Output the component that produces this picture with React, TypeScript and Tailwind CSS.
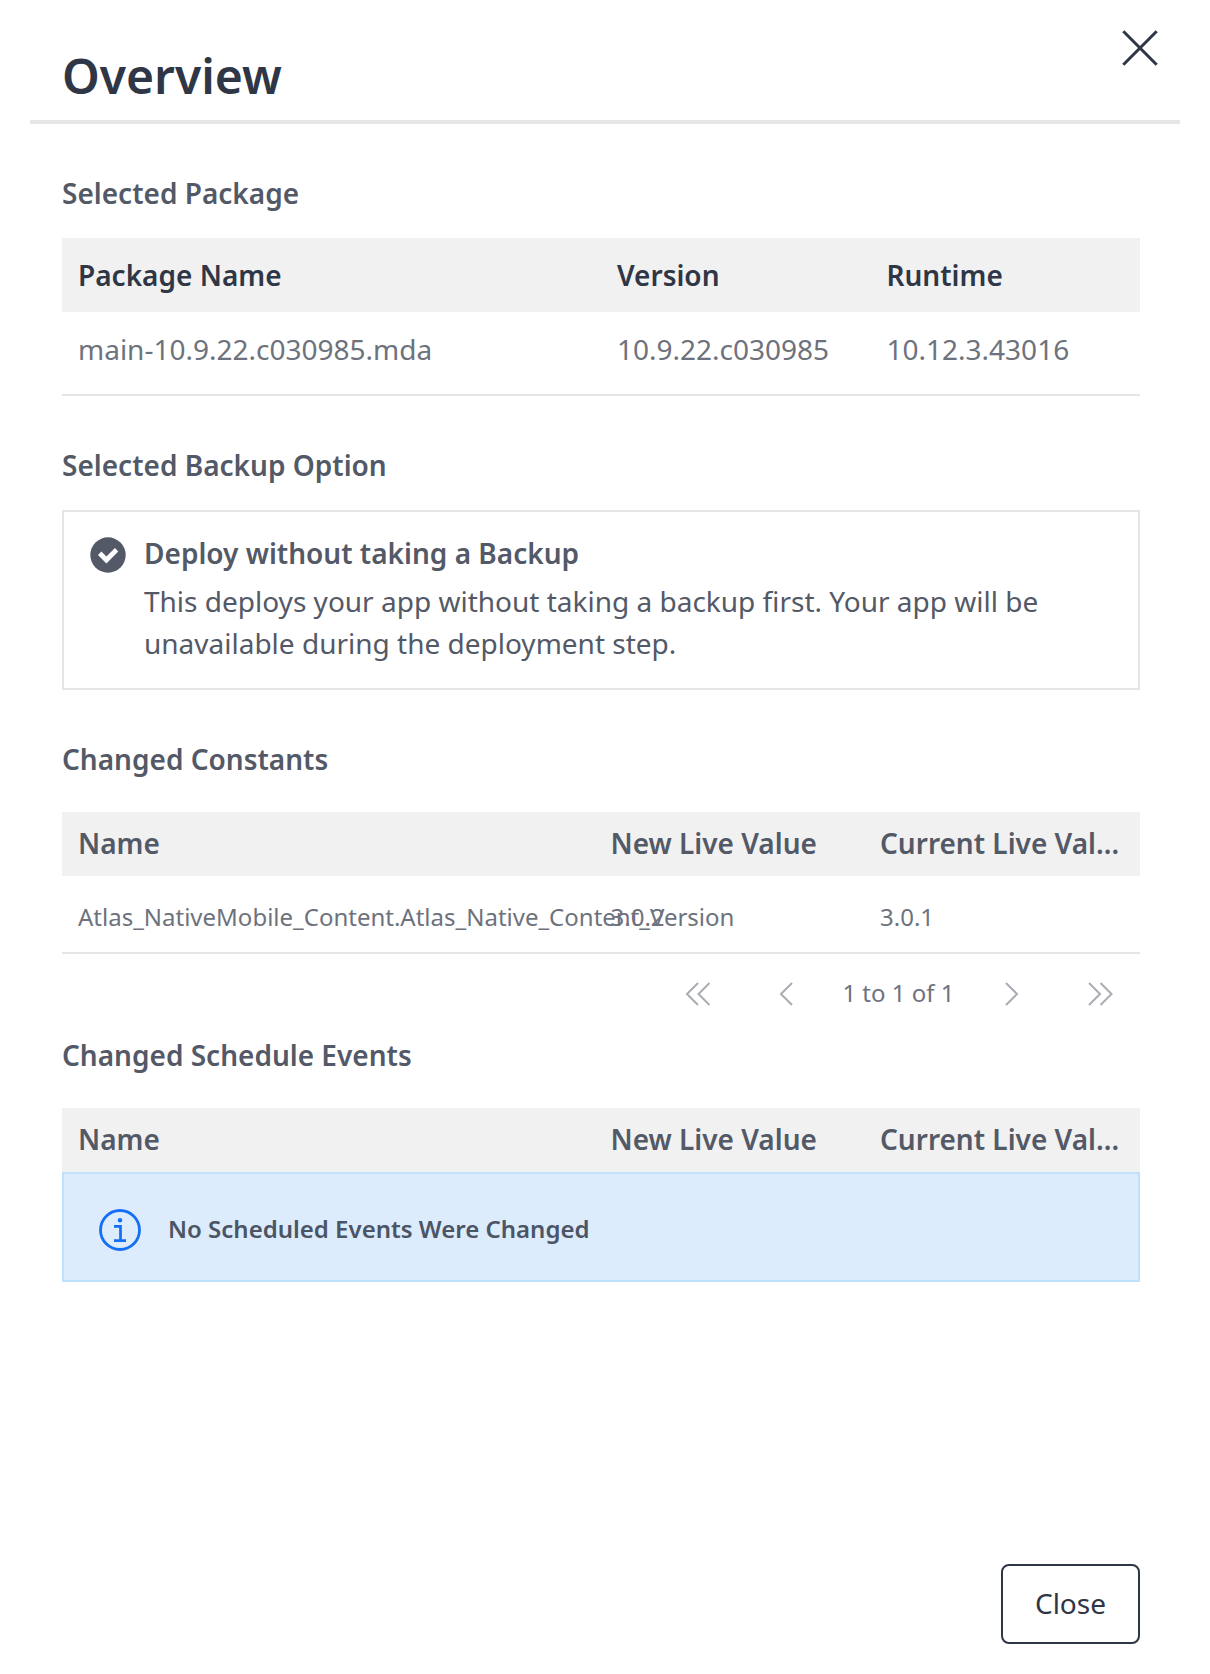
import type { ReactNode } from "react";

function SectionTitle({ children }: { children: ReactNode }) {
  return <h2 className="text-[28px] leading-[42px] font-semibold text-[#535966]">{children}</h2>;
}

function ValueHeader() {
  return (
    <div className="grid h-16 grid-cols-[532.5px_269.5px_276px] items-center bg-[#f1f1f1] pb-[2px] text-[28px] leading-[42px] font-semibold text-[#535966]">
      <div className="px-4">Name</div>
      <div className="px-4">New Live Value</div>
      <div className="truncate px-4">Current Live Value</div>
    </div>
  );
}

function Chevron({ direction, double = false }: { direction: "left" | "right"; double?: boolean }) {
  const left = direction === "left";
  return (
    <button className="flex" aria-label={left ? "Previous" : "Next"}>
      <svg width={double ? 26 : 14} height="24" fill="none" stroke="#a9acb3" strokeWidth="2">
        <path d={left ? "M13 1L2 12L13 23" : "M1 1L12 12L1 23"} />
        {double && <path d={left ? "M24.5 1L13.5 12L24.5 23" : "M12.5 1L23.5 12L12.5 23"} />}
      </svg>
    </button>
  );
}

export default function App() {
  return (
    <div className="flex h-[1674px] w-[1210px] flex-col bg-white px-[30px] font-['Noto_Sans',sans-serif]">
      <header className="flex h-[124px] items-start justify-between border-b-4 border-[#e6e6e6] pr-[22px] pl-8">
        <h1 className="mt-[43px] text-[48px] leading-[66px] font-semibold text-[#2f3646]">Overview</h1>
        <button className="mt-[30px] flex" aria-label="Close">
          <svg width="36" height="36" stroke="#2f3646" strokeWidth="3">
            <path d="M1.3 1.3L34.7 34.7M34.7 1.3L1.3 34.7" />
          </svg>
        </button>
      </header>

      <main className="mr-10 ml-8 flex flex-1 flex-col">
        <section className="mt-12">
          <SectionTitle>Selected Package</SectionTitle>
          <div className="mt-6 grid h-[74px] grid-cols-[2fr_1fr_1fr] items-center bg-[#f1f1f1] text-[28px] leading-[42px] font-semibold text-[#2f3646]">
            <div className="px-4">Package Name</div>
            <div className="px-4">Version</div>
            <div className="px-4">Runtime</div>
          </div>
          <div className="grid h-[84px] grid-cols-[2fr_1fr_1fr] border-b-2 border-[#e6e6e6] pt-4 text-[28px] leading-[42px] text-[#6d727d]">
            <div className="px-4">main-10.9.22.c030985.mda</div>
            <div className="px-4">10.9.22.c030985</div>
            <div className="px-4">10.12.3.43016</div>
          </div>
        </section>

        <section className="mt-12">
          <SectionTitle>Selected Backup Option</SectionTitle>
          <div className="mt-6 flex h-[180px] border-2 border-[#e6e6e6] pt-5 pl-[26px] text-[28px] leading-[42px] text-[#535966]">
            <svg className="mt-[5px] shrink-0" width="36" height="36" viewBox="0 0 36 36">
              <circle cx="18" cy="18" r="17.7" fill="#535966" />
              <path d="M9.7 16.3L16.4 23L26.6 12.8" fill="none" stroke="white" strokeWidth="4.8" />
            </svg>
            <div className="ml-[18px]">
              <h3 className="font-semibold">Deploy without taking a Backup</h3>
              <p className="mt-[6px] w-[920px]">
                This deploys your app without taking a backup first. Your app will be unavailable during the deployment step.
              </p>
            </div>
          </div>
        </section>

        <section className="mt-12">
          <SectionTitle>Changed Constants</SectionTitle>
          <div className="mt-8">
            <ValueHeader />
          </div>
          <div className="grid h-[78px] grid-cols-[532.5px_269.5px_276px] border-b-2 border-[#e6e6e6] pt-[23px] text-[24px] leading-[36px] whitespace-nowrap text-[#6d727d]">
            <div className="px-4">Atlas_NativeMobile_Content.Atlas_Native_Content_Version</div>
            <div className="px-4">3.0.2</div>
            <div className="px-4">3.0.1</div>
          </div>
          <div className="flex h-20 items-center justify-end pr-[26.5px] text-[24px] leading-[36px] text-[#6d727d]">
            <Chevron direction="left" double />
            <div className="ml-[67.5px] flex">
              <Chevron direction="left" />
            </div>
            <span className="mr-[50px] mb-[2px] ml-[49.5px]">1 to 1 of 1</span>
            <Chevron direction="right" />
            <div className="ml-[69px] flex">
              <Chevron direction="right" double />
            </div>
          </div>
        </section>

        <section>
          <SectionTitle>Changed Schedule Events</SectionTitle>
          <div className="mt-8">
            <ValueHeader />
          </div>
          <div className="flex h-[110px] items-center border-2 border-[#bfe0ff] bg-[#dcecfc] pt-[6px] pl-[35px]">
            <svg width="42" height="42" viewBox="0 0 42 42" fill="none" stroke="#146ff5">
              <circle cx="21" cy="21" r="19.5" strokeWidth="2.8" />
              <circle cx="21" cy="11.3" r="2.2" fill="#146ff5" stroke="none" />
              <path d="M15 17.3H21.5V31.5M15 31.7H27" strokeWidth="2.7" />
            </svg>
            <p className="mb-[2px] ml-[27px] text-[24px] leading-[36px] font-semibold text-[#4b5565]">No Scheduled Events Were Changed</p>
          </div>
        </section>

        <button className="mt-auto mb-[30px] h-20 w-[139px] self-end rounded-lg border-2 border-[#2f3646] pb-[2px] text-[28px] leading-[42px] text-[#2f3646]">
          Close
        </button>
      </main>
    </div>
  );
}
